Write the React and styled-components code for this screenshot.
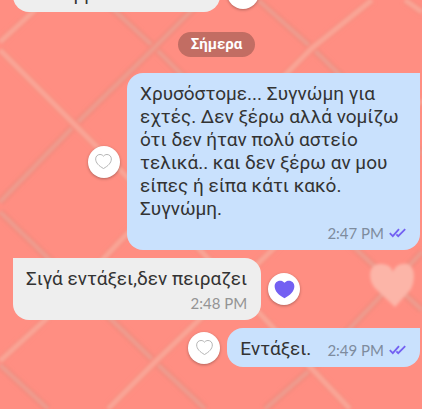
import styled, { createGlobalStyle } from "styled-components";

const GlobalStyle = createGlobalStyle`
    * {
        box-sizing: border-box;
    }

    body {
        margin: 0;
        background: #ff8e82;
        font-family: Roboto, "Noto Sans", sans-serif;
    }
`;

const Chat = styled.main`
    position: relative;
    height: 100vh;
    overflow: hidden;
    display: flex;
    flex-direction: column;
    justify-content: flex-end;
    padding: 0 2px 42px 13px;
`;

// sits behind the messages
const Wallpaper = styled.svg`
    position: absolute;
    inset: 0;
    width: 100%;
    height: 100%;
`;

const DayLabel = styled.div`
    position: relative;
    align-self: center;
    margin: 20px 0 16px;
    padding: 0 13px;
    border-radius: 13px;
    background: #c26d63;
    color: #fff;
    font-size: 15px;
    font-weight: 700;
    line-height: 25px;
`;

const Row = styled.div`
    position: relative;
    display: flex;
    flex-shrink: 0;
    flex-direction: ${({ $sent }) => ($sent ? "row-reverse" : "row")};
    align-items: center;
    gap: 7px;

    & + & {
        margin-top: 8px;
    }
`;

const Bubble = styled.div`
    display: flex;
    flex-direction: ${({ $inline }) => ($inline ? "row" : "column")};
    gap: 3px 16px;
    max-width: 72%;
    padding: 9px 14px 7px 13px;
    border-radius: ${({ $sent }) =>
        $sent ? "16px 0 16px 16px" : "0 16px 16px 16px"};
    background: ${({ $sent }) => ($sent ? "#c9e1fd" : "#eeeeee")};
`;

const Text = styled.p`
    margin: 0;
    color: #333;
    font-size: 19px;
    line-height: 23px;
`;

const Meta = styled.div`
    display: flex;
    align-items: center;
    align-self: flex-end;
    gap: 5px;
    color: ${({ $sent }) => ($sent ? "#7e8c9e" : "#949494")};
    font-family: Lato, sans-serif;
    font-size: 15px;
    line-height: 20px;
`;

const LikeButton = styled.button`
    display: flex;
    align-items: center;
    justify-content: center;
    flex-shrink: 0;
    width: 32px;
    height: 32px;
    padding: 0;
    border: 0;
    border-radius: 50%;
    background: #fff;
    box-shadow: 0 1px 3px rgba(0, 0, 0, 0.3);
    cursor: pointer;
`;

const Heart = ({ filled }) => (
    <svg
        width={filled ? 21 : 17}
        height={filled ? 19 : 15}
        viewBox="0 0 20 18"
        fill={filled ? "#7360f2" : "none"}
        stroke={filled ? "none" : "#b4b4b4"}
        strokeWidth="1.2"
    >
        <path d="M10 2.6C8.8 1.2 7.4.6 5.8.6 2.8.6.6 2.9.6 5.9c0 4.8 4 8.5 9.4 11.5 5.4-3 9.4-6.7 9.4-11.5 0-3-2.2-5.3-5.2-5.3-1.6 0-3 .6-4.2 2z" />
    </svg>
);

const Ticks = () => (
    <svg
        width="17"
        height="10"
        viewBox="0 0 17 10"
        fill="none"
        stroke="#7360f2"
        strokeWidth="1.8"
    >
        <path d="M.8 5.2l3 3L10 1.2M7.4 6.4l1.8 1.8 7-7" />
    </svg>
);

const LIGHT_LINES = [
    "M0 42L46 0",
    "M0 50L75 125L200 250L313 370L350 409",
    "M372 0L312 48L126 235L45 320L0 361",
    "M422 100L270 252L155 362L108 409",
    "M405 0L422 12",
];

const DIM_LINES = [
    "M103 0L155 48L360 253L422 310",
    "M258 0L312 48L422 154",
    "M202 0L150 52L75 125L0 202",
    "M0 212L50 260L155 362L205 409",
    "M422 252L375 302L310 370L265 409",
    "M0 365L48 409",
];

const Background = () => (
    <Wallpaper
        viewBox="0 0 422 409"
        preserveAspectRatio="xMidYMid slice"
        aria-hidden="true"
    >
        <defs>
            <filter id="soft">
                <feGaussianBlur stdDeviation="1.6" />
            </filter>
        </defs>
        <g filter="url(#soft)" fill="none">
            {DIM_LINES.map((d) => (
                <g key={d}>
                    <path d={d} stroke="#f68a7d" strokeWidth="9" />
                    <path d={d} stroke="#ee9c8f" strokeWidth="4" />
                </g>
            ))}
            {LIGHT_LINES.map((d) => (
                <g key={d}>
                    <path d={d} stroke="#f98c7f" strokeWidth="9" />
                    <path d={d} stroke="#f9a596" strokeWidth="5" />
                </g>
            ))}
            <path
                d="M395 307L377 290C367 281 368 264 380 264C387 264 391 266 393 272C395 266 400 263 407 264C416 267 415 281 411 289Z"
                fill="#fcb5a8"
            />
        </g>
    </Wallpaper>
);

const messages = [
    { id: 1, text: "Το κομμάτι και άλλα." },
    {
        id: 2,
        day: "Σήμερα",
        text: "Χρυσόστομε... Συγνώμη για εχτές. Δεν ξέρω αλλά νομίζω ότι δεν ήταν πολύ αστείο τελικά.. και δεν ξέρω αν μου είπες ή είπα κάτι κακό. Συγνώμη.",
        time: "2:47 PM",
        sent: true,
    },
    { id: 3, text: "Σιγά εντάξει,δεν πειραζει", time: "2:48 PM", liked: true },
    { id: 4, text: "Εντάξει.", time: "2:49 PM", sent: true, inline: true },
];

const Message = ({ message }) => {
    const { text, time, sent, inline, liked } = message;

    return (
        <Row $sent={sent}>
            <Bubble $sent={sent} $inline={inline}>
                <Text>{text}</Text>
                {time && (
                    <Meta $sent={sent}>
                        <time>{time}</time>
                        {sent && <Ticks />}
                    </Meta>
                )}
            </Bubble>
            <LikeButton type="button" aria-label="Like" aria-pressed={!!liked}>
                <Heart filled={liked} />
            </LikeButton>
        </Row>
    );
};

const App = () => (
    <>
        <GlobalStyle />
        <Chat>
            <Background />
            {messages.map((message) => [
                message.day && (
                    <DayLabel key={message.day}>{message.day}</DayLabel>
                ),
                <Message key={message.id} message={message} />,
            ])}
        </Chat>
    </>
);

export default App;
